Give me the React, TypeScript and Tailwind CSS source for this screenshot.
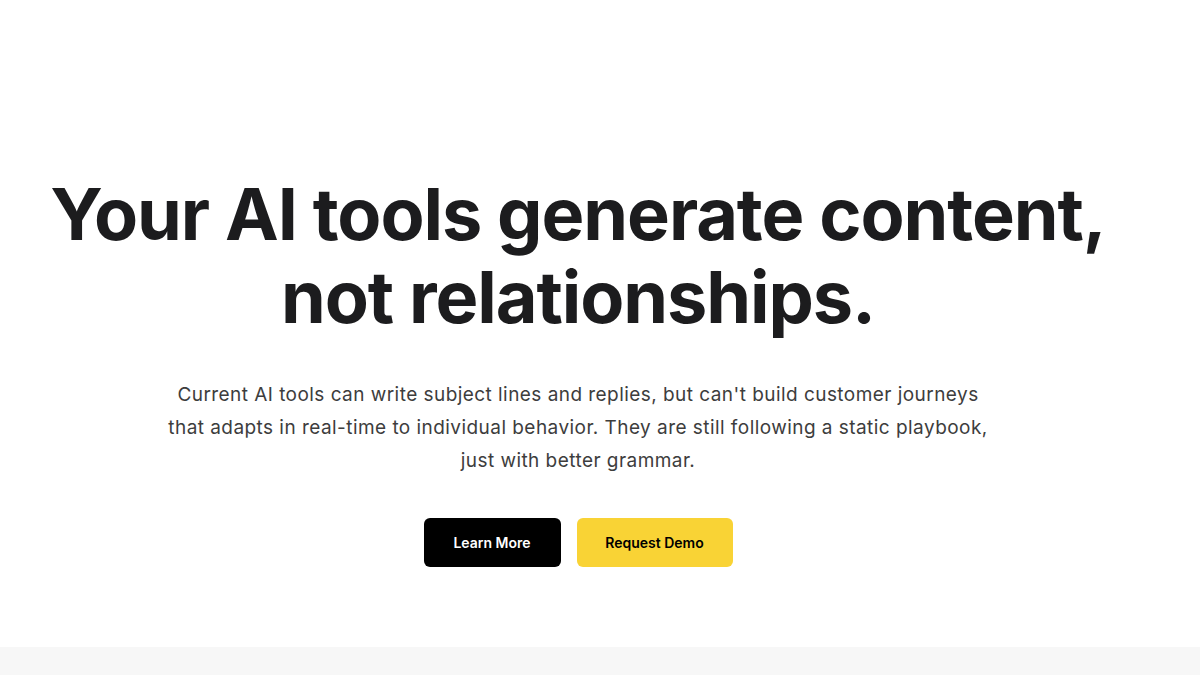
export default function App() {
  return (
    <div className="w-full min-h-[675px] bg-white" style={{ fontFamily: "Inter, 'Noto Sans', sans-serif" }}>
      <section className="h-[647px] flex flex-col items-center pr-[44px] pt-[172px]">
        <h1 className="text-[72px] leading-[83px] font-bold text-[#1c1c1e] text-center tracking-[-0.015em]">
          Your AI tools generate content,<br />not relationships.
        </h1>
        <p className="mt-[40px] max-w-[826px] text-center text-[19px] leading-[33px] tracking-[0.45px] text-[#3d3d3d]">
          Current AI tools can write subject lines and replies, but can't build customer journeys that adapts in real-time to individual behavior. They are still following a static playbook, just with better grammar.
        </p>
        <div className="mt-[41px] flex gap-4">
          <button className="h-[49px] w-[137px] rounded-md bg-black text-white text-[14px] font-semibold">Learn More</button>
          <button className="h-[49px] w-[156px] rounded-md bg-[#f9d335] text-black text-[14px] font-semibold">Request Demo</button>
        </div>
      </section>
      <section className="h-[28px] bg-[#f7f7f7]" />
    </div>
  );
}
